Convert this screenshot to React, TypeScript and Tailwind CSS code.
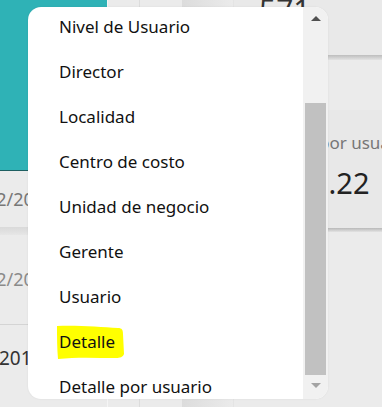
import React from "react";

const items = [
  "Nivel de Usuario",
  "Director",
  "Localidad",
  "Centro de costo",
  "Unidad de negocio",
  "Gerente",
  "Usuario",
  "Detalle",
  "Detalle por usuario",
];

export default function App() {
  return (
    <div
      className="relative w-[382px] h-[407px] overflow-hidden bg-[#ebebeb] flex"
      style={{ fontFamily: '"Noto Sans", "Open Sans", sans-serif' }}
    >
      {/* column 1 */}
      <div className="w-[107px] flex flex-col shrink-0">
        <div className="h-[171px] bg-[#2fb2b6] border-b-[1px] border-[#1e5f61]" />
        <div className="h-[56px] flex items-center overflow-hidden">
          <span className="text-[18px] text-[#777] whitespace-nowrap -ml-[14px]">12/2022</span>
        </div>
        <div className="h-[8px] bg-gradient-to-b from-[#d9d9d9] to-[#e6e6e6]" />
        <div className="h-[90px] flex items-center overflow-hidden border-b border-[#d4d4d4]">
          <span className="text-[18px] text-[#8a8a8a] whitespace-nowrap -ml-[14px]">12/2022</span>
        </div>
        <div className="h-[66px] flex items-center overflow-hidden">
          <span className="text-[19px] text-[#333] whitespace-nowrap -ml-[1px]">2019</span>
        </div>
      </div>
      {/* column 2 */}
      <div className="w-[75px] shrink-0 flex">
        <div className="w-[32px] border-l border-[#f5f5f5]" />
        <div className="w-[28px] border-l border-[#dcdcdc]" />
        <div className="flex-1" />
      </div>
      <div className="w-[51px] shrink-0 bg-gradient-to-r from-[#dcdcdc] to-[#ebebeb]" />
      {/* column 3 */}
      <div className="flex-1 flex flex-col border-l border-[#e4e4e4]">
        <div className="h-[55px] bg-[#e9e9e9] overflow-hidden">
          <div className="pl-[25px] -mt-[5px] text-[30px] leading-none text-[#333]">571</div>
        </div>
        <div className="h-[5px] bg-gradient-to-b from-[#bdbdbd] to-[#e3e3e3]" />
        <div className="h-[50px] bg-[#ebebeb]" />
        <div className="h-[118px] bg-[#e8e8e8] flex flex-col pt-[24px]">
          <span className="pl-[85px] text-[17px] text-[#777] whitespace-nowrap leading-none">por usuario</span>
          <span className="pl-[78px] text-[29px] text-[#222] whitespace-nowrap leading-none mt-[17px]">0.22</span>
        </div>
        <div className="h-[4px] bg-gradient-to-b from-[#b8b8b8] to-[#e3e3e3]" />
        <div className="flex-1 bg-[#ebebeb]" />
      </div>

      {/* dropdown menu */}
      <div className="absolute left-[28px] top-[7px] w-[300px] h-[392px] bg-white rounded-[13px] overflow-hidden flex shadow-[0_0_2px_rgba(0,0,0,0.08)]">
        <div className="flex-1 overflow-hidden">
          <div className="-mt-[2.5px] flex flex-col">
            {items.map((t) => (
              <div key={t} className="relative h-[45px] flex items-center pl-[31px] shrink-0">
                {t === "Detalle" && (
                  <svg
                    className="absolute left-[28px] top-[4px]"
                    width="70"
                    height="38"
                    viewBox="0 0 70 38"
                  >
                    <path
                      d="M1 2 C 20 1, 45 3, 62 4 C 66 4, 67 6, 67 10 L 68 30 C 67 33, 64 34, 60 34 C 40 34, 20 33, 2 35 C 1 25, 1 12, 1 2 Z"
                      fill="#ffff00"
                    />
                  </svg>
                )}
                <span className="relative text-[17px] text-[#111] whitespace-nowrap">{t}</span>
              </div>
            ))}
          </div>
        </div>
        {/* scrollbar */}
        <div className="w-[25px] bg-[#f1f1f1] relative shrink-0">
          <div className="absolute left-[8px] top-[9px] w-0 h-0 border-l-[5px] border-r-[5px] border-b-[5px] border-l-transparent border-r-transparent border-b-[#505050]" />
          <div className="absolute left-[2px] top-[96px] w-[21px] h-[272px] bg-[#c1c1c1]" />
          <div className="absolute left-[8px] top-[376px] w-0 h-0 border-l-[5px] border-r-[5px] border-t-[5px] border-l-transparent border-r-transparent border-t-[#a3a3a3]" />
        </div>
      </div>
    </div>
  );
}
